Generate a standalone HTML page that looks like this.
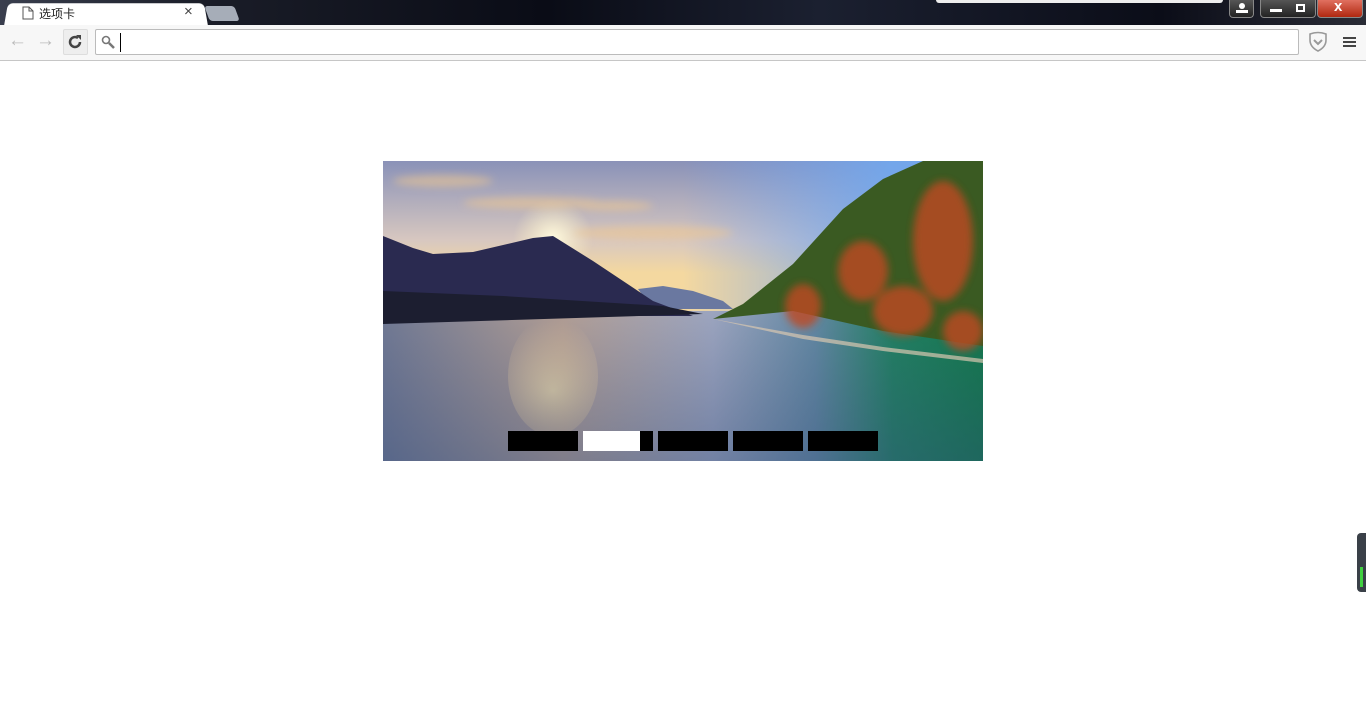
<!DOCTYPE html>
<html><head><meta charset="utf-8"><style>
*{margin:0;padding:0;box-sizing:border-box}
body{width:1366px;height:725px;background:#fff;position:relative;overflow:hidden;font-family:"Liberation Sans","Noto Sans CJK SC",sans-serif}
.top{position:absolute;left:0;top:0;width:1366px;height:25px;background:linear-gradient(90deg,#3a3f4e 0,#1a1d28 15%,#0a0c16 40%,#1b2030 60%,#0b0d18 85%,#2a2c36 100%)}
.tab{position:absolute;left:6px;top:3px;width:200px;height:23px;background:#fff;border-radius:5px 5px 0 0;transform:perspective(30px) rotateX(3deg);}
.tab2{position:absolute;left:207px;top:6px;width:30px;height:15px;background:#a6adb8;border-radius:3px;transform:skewX(20deg)}
.tool{position:absolute;left:0;top:25px;width:1366px;height:36px;background:#f7f7f7;border-bottom:1px solid #c6c6c6}
.addr{position:absolute;left:95px;top:4px;width:1204px;height:26px;background:#fff;border:1px solid #bbb;border-radius:2px}
.wb{position:absolute;top:0;height:18px;border:1px solid #888;border-top:none;border-radius:0 0 4px 4px;background:linear-gradient(#555,#222)}
.bars div{position:absolute;top:431px;width:70px;height:20px;background:#000}
</style></head><body>
<div class="top"></div>
<div style="position:absolute;left:936px;top:0;width:287px;height:3px;background:#eee;border-radius:0 0 3px 3px"></div>
<div class="tab"></div>
<div class="tab2"></div>
<svg style="position:absolute;left:22px;top:6px" width="12" height="14"><path d="M1 1h6l4 4v8H1z M7 1v4h4" fill="#fff" stroke="#555"/></svg>
<div style="position:absolute;left:39px;top:5px;font-size:12px;color:#222">选项卡</div>
<div style="position:absolute;left:184px;top:3px;font-size:15px;color:#444">×</div>
<div class="wb" style="left:1229px;width:25px"><svg width="23" height="16"><circle cx="12" cy="6" r="3" fill="#fff"/><rect x="6" y="10" width="12" height="3" fill="#fff"/></svg></div>
<div class="wb" style="left:1260px;width:56px"><div style="position:absolute;left:9px;top:9px;width:12px;height:3px;background:#fff"></div><div style="position:absolute;left:35px;top:4px;width:9px;height:8px;border:2px solid #fff"></div></div>
<div class="wb" style="left:1317px;width:46px;background:linear-gradient(#e07060,#b02810)"><div style="position:absolute;left:16px;top:-2px;color:#fff;font-weight:bold;font-size:15px">x</div></div>
<div class="tool">
<div style="position:absolute;left:8px;top:5px;font-size:19px;color:#bbb">←</div>
<div style="position:absolute;left:36px;top:5px;font-size:19px;color:#bbb">→</div>
<div style="position:absolute;left:63px;top:4px;width:25px;height:26px;background:#eee;border:1px solid #ddd;border-radius:2px"></div>
<svg style="position:absolute;left:67px;top:9px" width="16" height="16"><path d="M13 8A5 5 0 1 1 11 4" fill="none" stroke="#444" stroke-width="2.5"/><path d="M9 1h5v5z" fill="#444"/></svg>
<div class="addr"><svg style="position:absolute;left:5px;top:5px" width="14" height="14"><circle cx="5" cy="5" r="3.5" fill="none" stroke="#777" stroke-width="1.6"/><path d="M8 8l5 5" stroke="#777" stroke-width="2.5"/></svg><div style="position:absolute;left:24px;top:3px;width:1px;height:19px;background:#000"></div></div>
<svg style="position:absolute;left:1308px;top:6px" width="20" height="22"><path d="M2 3q8-3 16 0v6q0 7-8 11q-8-4-8-11z" fill="none" stroke="#999" stroke-width="1.6"/><path d="M6 9l4 4l4-4" fill="none" stroke="#999" stroke-width="2"/></svg>
<div style="position:absolute;left:1343px;top:12px;width:13px;height:2px;background:#444;box-shadow:0 4px #444,0 8px #444"></div>
</div>
<svg style="position:absolute;left:383px;top:161px" width="600" height="300">
<defs>
<linearGradient id="skyv" x1="0" y1="0" x2="0" y2="1"><stop offset="0" stop-color="#8a92b8"/><stop offset="0.5" stop-color="#d8c8c0"/><stop offset="0.7" stop-color="#f4d8a0"/></linearGradient>
<linearGradient id="skyh" x1="0" y1="0" x2="1" y2="0"><stop offset="0.5" stop-color="#70a0f0" stop-opacity="0"/><stop offset="0.85" stop-color="#70a8f0" stop-opacity="0.9"/></linearGradient>
<linearGradient id="wat" x1="0" y1="0" x2="1" y2="0"><stop offset="0" stop-color="#788098"/><stop offset="0.3" stop-color="#c0a898"/><stop offset="0.55" stop-color="#a8b0c8"/><stop offset="0.72" stop-color="#6890a8"/><stop offset="0.85" stop-color="#208860"/><stop offset="1" stop-color="#108048"/></linearGradient>
<linearGradient id="wv" x1="0" y1="0" x2="0" y2="1"><stop offset="0" stop-color="#304070" stop-opacity="0.1"/><stop offset="1" stop-color="#304878" stop-opacity="0.45"/></linearGradient>
<radialGradient id="sun" cx="170" cy="78" r="40" gradientUnits="userSpaceOnUse"><stop offset="0" stop-color="#fffbe0"/><stop offset="1" stop-color="#fff0c0" stop-opacity="0"/></radialGradient>
<radialGradient id="refl" cx="170" cy="230" r="70" gradientUnits="userSpaceOnUse"><stop offset="0" stop-color="#ffe8b0" stop-opacity=".9"/><stop offset="1" stop-color="#ffd8a0" stop-opacity="0"/></radialGradient>
<filter id="bl"><feGaussianBlur stdDeviation="4"/></filter>
</defs>
<rect width="600" height="160" fill="url(#skyv)"/>
<rect width="600" height="160" fill="url(#skyh)"/>
<rect width="600" height="160" fill="url(#sun)"/>
<g filter="url(#bl)" opacity=".55" fill="#f0c890">
<ellipse cx="60" cy="20" rx="50" ry="6"/><ellipse cx="150" cy="42" rx="70" ry="6"/><ellipse cx="270" cy="72" rx="80" ry="7"/><ellipse cx="230" cy="45" rx="40" ry="5"/>
</g>
<rect y="150" width="600" height="150" fill="url(#wat)"/>
<ellipse cx="170" cy="215" rx="45" ry="60" fill="url(#refl)"/>
<rect y="150" width="600" height="150" fill="url(#wv)"/>
<path d="M255 128l25-3l30 5l30 10l10 8l-80 0z" fill="#6a78a0"/>
<path d="M0 75l30 12l20 6l40-2l60-14l20-2l40 25l60 40l40 15l-310 0z" fill="#2a2a50"/>
<path d="M0 130l120 5l160 10l40 8l-320 10z" fill="#1c1e30"/>
<path d="M330 158l30-15l50-40l50-55l40-30l40-18l60-5l0 190l-100-15l-90-20z" fill="#3a5a22"/>
<g fill="#c04a22" opacity=".8" filter="url(#bl)">
<ellipse cx="560" cy="80" rx="30" ry="60"/><ellipse cx="480" cy="110" rx="25" ry="30"/><ellipse cx="420" cy="145" rx="18" ry="22"/><ellipse cx="520" cy="150" rx="30" ry="25"/><ellipse cx="580" cy="170" rx="20" ry="20"/>
</g>
<path d="M330 158l90 20l80 12l100 12l0 -4l-100-12l-80-12z" fill="#d8c8b0" opacity=".7"/>
</svg>
<div class="bars">
<div style="left:508px"></div>
<div style="left:583px;background:linear-gradient(90deg,#fff 57px,#000 57px)"></div>
<div style="left:658px"></div>
<div style="left:733px"></div>
<div style="left:808px"></div>
</div>
<div style="position:absolute;left:1357px;top:533px;width:9px;height:59px;background:#3a4048;border-radius:4px 0 0 4px"><div style="position:absolute;left:3px;top:34px;width:3px;height:20px;background:#40d040"></div></div>
</body></html>
